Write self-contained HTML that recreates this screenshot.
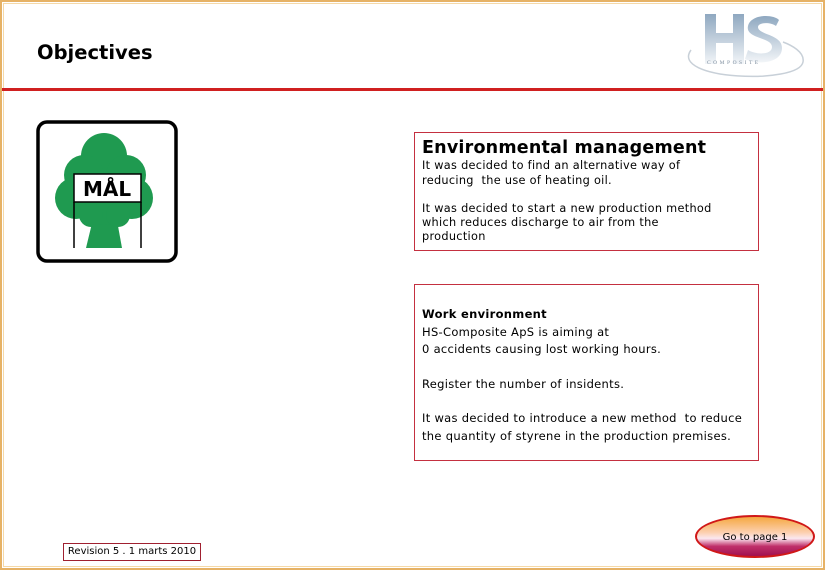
<!DOCTYPE html>
<html><head><meta charset="utf-8"><style>
*{margin:0;padding:0;box-sizing:border-box}
body{width:825px;height:570px;background:#fff;position:relative;overflow:hidden;font-family:"DejaVu Sans","Liberation Sans",sans-serif;color:#000}
.frame{position:absolute;left:0;top:0;width:825px;height:570px;border:2px solid #e6b266;outline:1px solid #f5d9a8;outline-offset:-4px}
.red{position:absolute;left:2px;top:88px;width:821px;height:3px;background:#d02020}
h1{position:absolute;left:37px;top:41px;font-size:19.5px;font-weight:bold;font-family:"DejaVu Sans",sans-serif}
.box{position:absolute;border:1px solid #c43040;font-size:11.5px;line-height:14px;letter-spacing:0.3px}
p{white-space:nowrap}
</style></head><body>
<div class="frame"></div>
<div class="red"></div>
<h1>Objectives</h1>
<svg style="position:absolute;left:675px;top:10px" width="135" height="72" viewBox="0 0 135 72">
<defs><linearGradient id="g" x1="0" y1="0" x2="0" y2="1"><stop offset="0" stop-color="#8fa8c0"/><stop offset="1" stop-color="#f2f5f8"/></linearGradient></defs>
<path d="M30 4h11v19h17V4h11v50H58V33H41v21H30z" fill="url(#g)"/>
<path d="M104 10c-6-6-28-6-31 6-3 13 24 11 24 21 0 8-16 8-24 3l-3 9c11 6 37 5 37-11 0-14-24-13-24-21 0-5 13-5 18-1z" fill="url(#g)"/>
<path d="M16 40c-22 30 108 35 112 12 2-10-12-17-20-20" fill="none" stroke="#c8d0d8" stroke-width="1.5"/>
<text x="32" y="54" font-size="5.5" letter-spacing="2.5" fill="#8090a0" font-family="Liberation Serif,serif">COMPOSITE</text>
</svg>
<svg style="position:absolute;left:36px;top:120px" width="142" height="143" viewBox="0 0 142 143">
<rect x="2" y="2" width="138" height="139" rx="9" fill="#fff" stroke="#000" stroke-width="3.5"/>
<g fill="#1f9a50">
<path d="M50 128 58 95 80 95 86 128z"/>
<circle cx="68" cy="36" r="23"/>
<circle cx="48" cy="55" r="20"/>
<circle cx="90" cy="55" r="20"/>
<circle cx="40" cy="78" r="21"/>
<circle cx="96" cy="78" r="21"/>
<circle cx="68" cy="80" r="25"/>
<circle cx="55" cy="95" r="12"/>
<circle cx="82" cy="95" r="12"/>
</g>
<rect x="38" y="54" width="67" height="28" fill="#fff" stroke="#000" stroke-width="1.5"/>
<line x1="38" y1="82" x2="38" y2="128" stroke="#000" stroke-width="1.5"/>
<line x1="105" y1="82" x2="105" y2="128" stroke="#000" stroke-width="1.5"/>
<text x="71" y="76" text-anchor="middle" font-size="20" font-weight="bold" font-family="DejaVu Sans,sans-serif">MÅL</text>
</svg>
<div class="box" style="left:414px;top:132px;width:345px;height:119px;padding:5px 7px">
<p style="font-size:17.5px;font-weight:bold;line-height:20px;letter-spacing:0.2px">Environmental management</p>
<p style="font-size:11.3px;line-height:15px">It was decided to find an alternative way of<br>reducing&nbsp; the use of heating oil.</p>
<p style="font-size:11.3px;line-height:14px;margin-top:14px">It was decided to start a new production method<br>which reduces discharge to air from the<br>production</p>
</div>
<div class="box" style="left:414px;top:284px;width:345px;height:177px;padding:21px 7px;line-height:17.5px">
<p><b>Work environment</b><br>HS-Composite ApS is aiming at<br>0 accidents causing lost working hours.</p>
<p style="margin-top:17px">Register the number of insidents.</p>
<p style="margin-top:17px">It was decided to introduce a new method&nbsp; to reduce<br>the quantity of styrene in the production premises.</p>
</div>
<div style="position:absolute;left:695px;top:515px;width:120px;height:43px;border-radius:50%;border:2px solid #d01818;background:linear-gradient(#f5a840 0%,#fcd0b0 40%,#fbe8f0 55%,#c0306a 75%,#a01050 100%);font-size:10px;text-align:center;line-height:42px">Go to page 1</div>
<div style="position:absolute;left:63px;top:543px;width:138px;height:18px;border:1px solid #a02030;font-size:10px;text-align:center;line-height:16px">Revision 5 . 1 marts 2010</div>
</body></html>
